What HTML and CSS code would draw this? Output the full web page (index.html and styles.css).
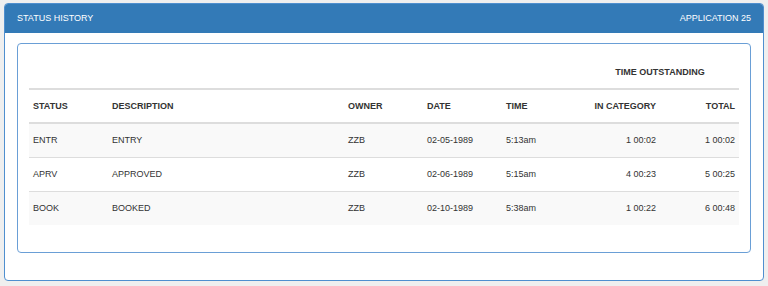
FILE: index.html
```html
<!DOCTYPE html>
<html>
<head>
<meta charset="utf-8">
<link rel="stylesheet" href="styles.css">
</head>
<body>
<div class="panel">
  <div class="panel-heading">
    <span>STATUS HISTORY</span>
    <span>APPLICATION 25</span>
  </div>
  <div class="panel-body">
    <div class="box">
      <table class="grid">
        <colgroup>
          <col class="c-narrow"><col><col class="c-narrow"><col class="c-narrow"><col class="c-narrow"><col class="c-narrow"><col class="c-narrow">
        </colgroup>
        <thead>
          <tr class="group-row">
            <th></th><th></th><th></th><th></th><th></th>
            <th colspan="2" class="center">TIME OUTSTANDING</th>
          </tr>
          <tr class="head-row">
            <th>STATUS</th>
            <th>DESCRIPTION</th>
            <th>OWNER</th>
            <th>DATE</th>
            <th>TIME</th>
            <th class="right">IN CATEGORY</th>
            <th class="right">TOTAL</th>
          </tr>
        </thead>
        <tbody>
          <tr class="odd">
            <td>ENTR</td><td>ENTRY</td><td>ZZB</td><td>02-05-1989</td><td>5:13am</td><td class="right">1 00:02</td><td class="right">1 00:02</td>
          </tr>
          <tr>
            <td>APRV</td><td>APPROVED</td><td>ZZB</td><td>02-06-1989</td><td>5:15am</td><td class="right">4 00:23</td><td class="right">5 00:25</td>
          </tr>
          <tr class="odd">
            <td>BOOK</td><td>BOOKED</td><td>ZZB</td><td>02-10-1989</td><td>5:38am</td><td class="right">1 00:22</td><td class="right">6 00:48</td>
          </tr>
        </tbody>
      </table>
    </div>
  </div>
</div>
</body>
</html>
```
FILE: styles.css
```css
html, body {
  margin: 0;
  padding: 0;
}
body {
  background: #efefef;
  padding: 3px 4px 0 4px;
  font-family: "Liberation Sans", Arial, sans-serif;
  font-size: 9px;
  color: #333;
}
.panel {
  background: #fff;
  border: 1px solid #4f8fcf;
  border-radius: 4px;
  overflow: hidden;
}
.panel-heading {
  background: #337ab7;
  color: #fff;
  height: 29px;
  line-height: 29px;
  padding: 0 12px;
  display: flex;
  justify-content: space-between;
  font-size: 9px;
}
.panel-body {
  padding: 10px 12px 27px 12px;
}
.box {
  border: 1px solid #6a9fd6;
  border-radius: 4px;
  padding: 12px 11px 27px 11px;
}
.grid {
  width: 100%;
  border-collapse: separate;
  border-spacing: 0;
  table-layout: fixed;
}
.c-narrow {
  width: 79px;
}
.grid th, .grid td {
  padding: 8px 4px;
  line-height: 17px;
  text-align: left;
  white-space: nowrap;
}
.grid th {
  font-weight: bold;
  color: #333;
  line-height: 16px;
}
.group-row th {
  border-bottom: 2px solid #ddd;
}
.head-row th {
  border-bottom: 2px solid #ddd;
}
.grid tbody tr + tr td {
  border-top: 1px solid #ddd;
}
.grid tbody tr.odd td {
  background: #f9f9f9;
}
.grid .right {
  text-align: right;
}
.grid .center {
  text-align: center;
}
```
